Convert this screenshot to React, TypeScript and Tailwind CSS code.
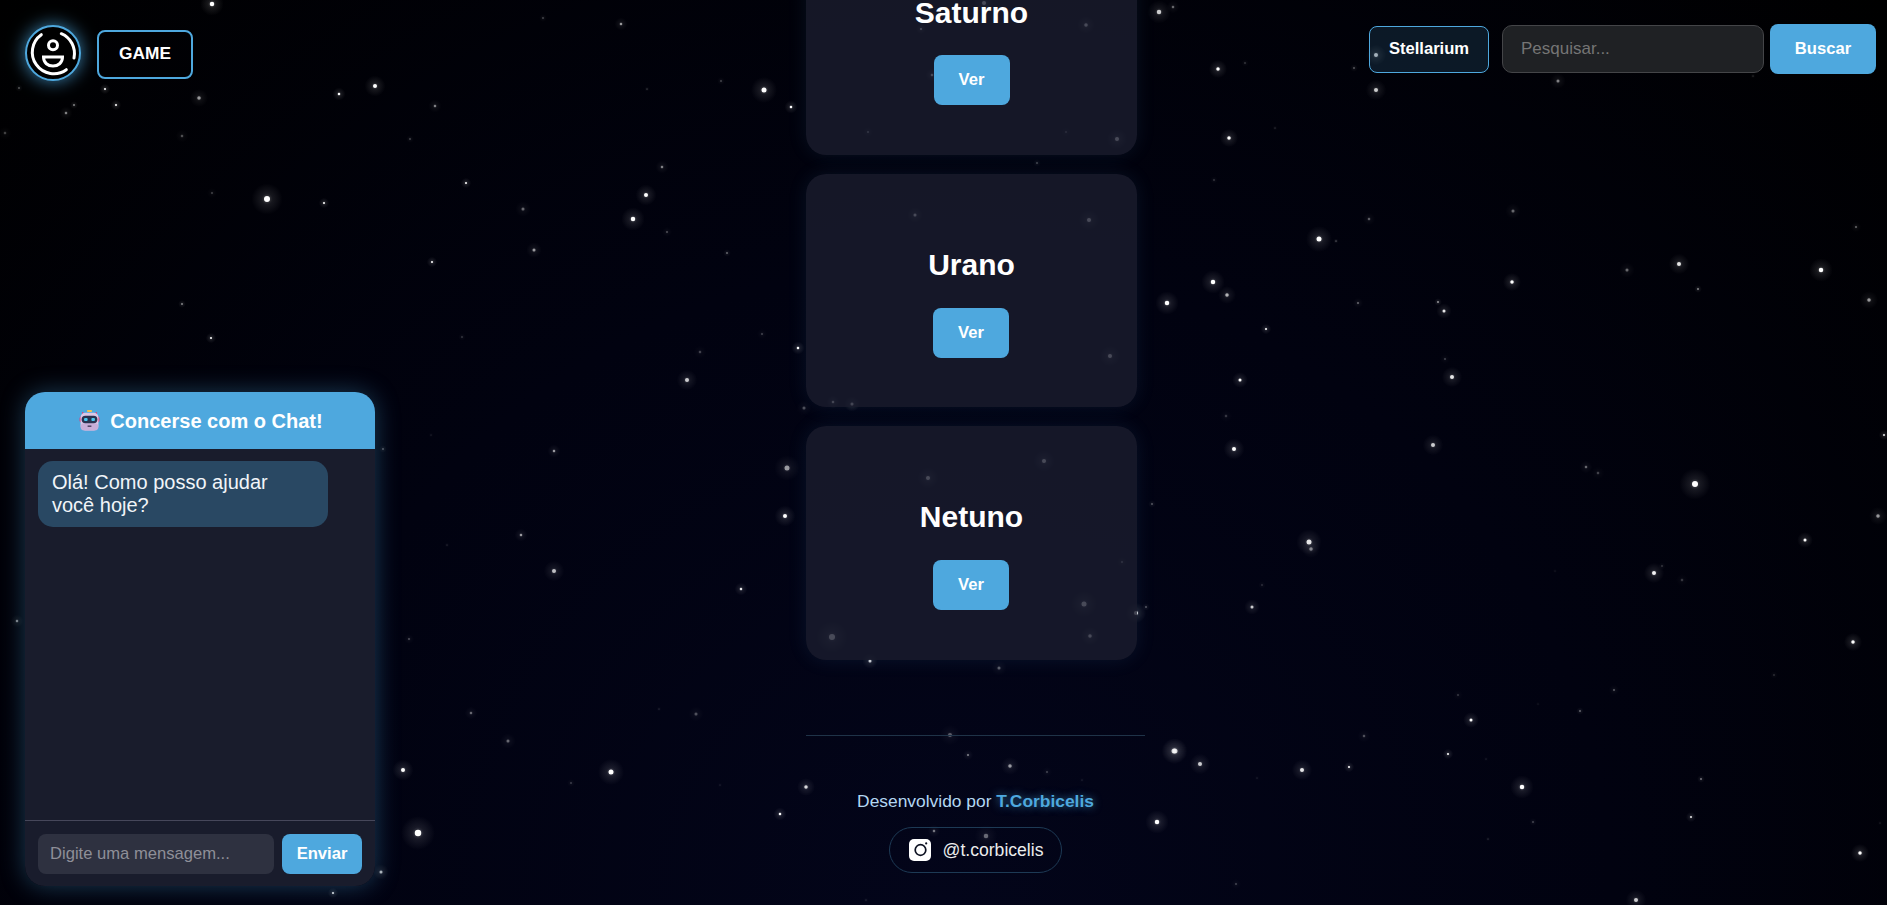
// star field: [x, y, diameter, opacity]
const stars: [number, number, number, number][] = [
  [19, 88, 1.5, 0.5], [105, 89, 2, 1], [199, 98, 3.5, 0.6], [339, 94, 2.5, 1], [375, 86, 4, 1], [435, 106, 2.5, 0.5],
  [74, 105, 1.5, 0.8], [116, 105, 2, 1], [66, 113, 2.5, 0.5], [5, 133, 2.5, 0.25], [182, 136, 2.5, 0.3], [410, 139, 1.5, 0.4],
  [647, 89, 1, 0.4], [721, 81, 1.5, 0.4], [764, 90, 5, 1], [791, 107, 2.5, 1], [662, 167, 2.5, 0.5], [466, 183, 2, 1],
  [646, 195, 4, 1], [212, 193, 2, 0.25], [267, 199, 6, 1], [324, 203, 2, 1], [523, 209, 3, 0.4], [633, 219, 4.5, 1],
  [667, 232, 2, 0.3], [534, 250, 3, 0.6], [727, 253, 1.5, 0.6], [432, 262, 2, 1], [182, 304, 1.5, 0.8], [211, 338, 2, 1],
  [462, 337, 1.5, 0.3], [762, 334, 2, 0.25], [798, 348, 2.5, 1], [700, 352, 2.5, 0.25], [687, 380, 4, 0.8],
  [212, 4, 4.5, 1], [543, 18, 1.5, 0.4], [621, 24, 2.5, 0.6], [1159, 12, 4.5, 0.8], [1173, 7, 2.5, 0.4], [1218, 69, 3.5, 1],
  [1245, 63, 1.5, 0.3], [1376, 55, 4, 0.7], [1354, 68, 1.5, 0.5], [1376, 90, 4, 0.8], [1558, 81, 3, 0.5], [1753, 76, 1, 0.3],
  [1229, 138, 3.5, 1], [1275, 128, 1, 0.3], [1214, 180, 1.5, 0.3], [1513, 211, 3, 0.4], [1369, 219, 2.5, 0.35], [1319, 239, 5, 1],
  [1336, 241, 1, 0.6], [1679, 264, 4, 0.9], [1627, 270, 3, 0.4], [1821, 270, 4.5, 1], [1856, 227, 2, 0.4], [1213, 282, 4.5, 1],
  [1512, 282, 3.5, 1], [1227, 295, 3.5, 0.7], [1698, 289, 1.5, 0.8], [1167, 303, 4.5, 1], [1358, 303, 2, 0.4], [1438, 302, 1.5, 0.9],
  [1444, 311, 3, 0.9], [1869, 300, 3.5, 0.6], [1266, 329, 2, 1], [1445, 359, 2, 0.25], [1240, 380, 3, 1], [1452, 377, 4, 0.9],
  [1226, 416, 2.5, 0.2], [1234, 449, 4, 1], [1433, 445, 4, 0.8], [1884, 435, 2, 0.9], [1586, 467, 2.5, 0.4], [1598, 473, 2.5, 0.25],
  [1695, 484, 6, 1], [1152, 504, 1.5, 0.5], [1878, 516, 3.5, 0.6], [1805, 540, 3, 1], [1309, 542, 5, 0.9], [1311, 549, 3.5, 0.5],
  [1654, 573, 4, 0.95], [1662, 566, 1.5, 0.3], [1682, 580, 2.5, 0.2], [1555, 571, 1, 0.15], [1262, 585, 1.5, 0.25], [1252, 607, 3, 0.8],
  [1146, 607, 1.5, 0.5], [1136, 613, 4, 0.9], [1853, 642, 3.5, 1], [1774, 675, 1.5, 0.25], [1614, 690, 2, 0.35], [1458, 695, 2, 0.2],
  [1580, 711, 1.5, 0.6], [1538, 704, 1, 0.15], [1471, 720, 3, 1], [1364, 736, 2.5, 0.3], [1175, 751, 5, 0.8], [1200, 764, 4, 0.8],
  [1448, 754, 2, 1], [1486, 759, 1, 0.2], [1302, 770, 4, 0.9], [1349, 767, 2, 1], [1257, 778, 1, 0.2], [1701, 779, 1.5, 0.7],
  [1522, 787, 4.5, 1], [1157, 822, 4.5, 1], [1691, 817, 2, 0.9], [1533, 822, 1.5, 0.4], [1880, 823, 1, 0.2], [1488, 839, 1, 0.3],
  [1860, 853, 3.5, 1], [1236, 884, 2, 0.25], [1636, 900, 4, 0.8],
  [804, 408, 3, 0.3], [431, 435, 1, 0.2], [383, 449, 1.5, 0.5], [554, 451, 2.5, 0.6], [787, 468, 5, 0.6], [785, 516, 4, 1],
  [521, 535, 2.5, 0.6], [447, 545, 1, 0.25], [554, 571, 4, 0.75], [741, 589, 2.5, 0.9], [409, 639, 2, 0.3], [471, 713, 2.5, 0.4],
  [659, 709, 1, 0.25], [696, 714, 3, 0.3], [508, 741, 3, 0.4], [403, 770, 4, 1], [611, 772, 5, 1], [571, 783, 1.5, 0.35],
  [720, 785, 1, 0.2], [806, 787, 3.5, 0.85], [780, 814, 2.5, 1], [418, 833, 6.5, 1], [381, 872, 3, 0.7], [333, 893, 2, 0.9],
  [17, 621, 2.5, 0.5],
  // under the cards
  [1086, 25, 3.5, 1], [984, 3, 4, 1], [921, 29, 2, 1], [932, 75, 2.5, 1], [868, 132, 2, 0.6], [1066, 132, 2, 0.4], [1117, 139, 4, 1],
  [1037, 163, 1.5, 0.4], [852, 404, 3, 0.9], [928, 478, 4, 1], [1044, 461, 4, 1], [1122, 562, 2, 0.5], [1084, 604, 5, 1],
  [1090, 636, 3.5, 1], [832, 637, 6, 1], [870, 661, 3, 0.8], [999, 668, 3, 0.35], [915, 215, 3, 1], [1089, 220, 4, 1], [1110, 356, 4, 1],
  [833, 402, 2.5, 0.9], [950, 735, 4, 0.35], [968, 755, 2, 0.5], [1010, 766, 3.5, 0.6], [1047, 772, 2, 0.25], [1082, 780, 1, 0.2],
  [1174, 751, 5, 0.8], [934, 831, 2.5, 0.45], [986, 836, 4.5, 0.4], [866, 900, 1, 0.25],
];

const planets = [
  { name: "Saturno", card: "h-[233px]", button: "-translate-y-px" },
  { name: "Urano", card: "h-[233px]", button: "mr-px" },
  { name: "Netuno", card: "h-[234px]", button: "mr-px" },
];

function StarField() {
  return (
    <svg className="absolute inset-0 h-full w-full" viewBox="0 0 1887 905" aria-hidden>
      <defs>
        <radialGradient id="halo">
          <stop offset="0%" stopColor="#ffffff" stopOpacity="0.3" />
          <stop offset="35%" stopColor="#ffffff" stopOpacity="0.09" />
          <stop offset="100%" stopColor="#ffffff" stopOpacity="0" />
        </radialGradient>
      </defs>
      {stars.map(([x, y, d, o], i) => (
        <g key={i} opacity={o}>
          <circle cx={x} cy={y} r={d * 2.6} fill="url(#halo)" />
          <circle cx={x} cy={y} r={d / 2} fill="#ffffff" />
        </g>
      ))}
    </svg>
  );
}

function Logo() {
  return (
    <div className="h-[56px] w-[56px] shrink-0 rounded-full border-2 border-[#4ea8de] bg-black shadow-[0_0_18px_rgba(78,168,222,0.8)]">
      <svg viewBox="0 0 56 56" className="-m-[2px] h-[56px] w-[56px]" fill="none" stroke="#ffffff" strokeWidth="3" strokeLinecap="round">
        <path d="M16.3 9.7 A21.5 21.5 0 1 0 41.3 44.7" />
        <path d="M36.3 8.7 A21.5 21.5 0 0 1 49 33" />
        <circle cx="28" cy="20.3" r="4.5" />
        <path d="M18.5 32 H37.5 C37.5 38 33 41 28 41 C23 41 18.5 38 18.5 32 Z" />
      </svg>
    </div>
  );
}

function RobotIcon() {
  return (
    <svg viewBox="0 0 20 20" className="h-[21px] w-[21px] shrink-0" aria-hidden>
      <rect x="7.5" y="0" width="5" height="2" rx="1" fill="#f3c14b" />
      <path d="M3.5 2 V6 M16.5 2 V6" stroke="#d9457f" strokeWidth="1.2" />
      <rect x="0.5" y="6" width="19" height="6" rx="2" fill="#d9457f" />
      <rect x="1.5" y="2.5" width="17" height="17" rx="4.5" fill="#dcc6e6" />
      <rect x="1.5" y="12.5" width="17" height="7" rx="3.5" fill="#c9aed8" />
      <rect x="2.5" y="5.5" width="15" height="7" rx="3.5" fill="#2b3350" />
      <rect x="4.8" y="7.5" width="3.4" height="3" rx="1" fill="#49c6ef" />
      <rect x="11.8" y="7.5" width="3.4" height="3" rx="1" fill="#49c6ef" />
      <rect x="8.2" y="14.8" width="3.6" height="1.2" fill="#3b3350" />
    </svg>
  );
}

function Chat() {
  return (
    <div className="absolute bottom-[19px] left-[25px] flex h-[494px] w-[350px] flex-col overflow-hidden rounded-[20px] bg-[rgba(26,29,45,0.97)] shadow-[0_0_25px_rgba(78,168,222,0.35)]">
      <div className="flex h-[57px] shrink-0 items-center justify-center gap-[10px] bg-[#4ea8de] pl-[2px] text-[20px] font-bold text-white">
        <RobotIcon />
        <span>Concerse com o Chat!</span>
      </div>
      <div className="flex-1 px-[13px] pt-[12px]">
        <div className="w-[290px] rounded-[15px] bg-[#294863] px-[14px] py-[10px] text-[20px] leading-[23px] text-[#f1f5f9]">
          Olá! Como posso ajudar você hoje?
        </div>
      </div>
      <div className="flex h-[66px] shrink-0 items-start gap-[8px] border-t border-[#46475a] px-[13px] pt-[13px]">
        <input
          placeholder="Digite uma mensagem..."
          className="h-[40px] w-[236px] rounded-[8px] bg-[#2e3140] px-[12px] text-[16.6px] text-white outline-none placeholder:text-[#8e8f98]"
        />
        <button className="h-[40px] w-[82px] rounded-[8px] bg-[#4ea8de] text-[16.6px] font-bold text-white">Enviar</button>
      </div>
    </div>
  );
}

function PlanetCard({ name, card, button }: { name: string; card: string; button: string }) {
  return (
    <div className={`flex w-[331px] flex-col items-center rounded-[20px] bg-[rgba(26,29,46,0.8)] pt-[74px] shadow-[0_0_20px_rgba(78,168,222,0.1)] ${card}`}>
      <h2 className="text-[30px] font-bold leading-[34px] text-white">{name}</h2>
      <button className={`mt-[26px] h-[50px] w-[76px] rounded-[8px] bg-[#4ea8de] text-[16.6px] font-bold text-white ${button}`}>Ver</button>
    </div>
  );
}

function InstagramIcon() {
  return (
    <svg viewBox="0 0 22 22" className="h-[22px] w-[22px] shrink-0" aria-hidden>
      <rect width="22" height="22" rx="5" fill="#ffffff" />
      <circle cx="11.5" cy="11" r="5.3" fill="none" stroke="#0b1020" strokeWidth="1.7" />
      <circle cx="17.2" cy="4.4" r="1.1" fill="#0b1020" />
    </svg>
  );
}

export default function App() {
  return (
    <div className="relative h-[905px] w-full overflow-hidden bg-[radial-gradient(ellipse_at_50%_100%,#03051a_0%,#010210_50%,#000000_100%)] font-['Liberation_Sans',Arial,sans-serif]">
      <StarField />

      <main className="relative ml-[806px] -mt-[78px] flex w-[339px] flex-col">
        <div className="flex flex-col gap-[19px]">
          {planets.map((p) => (
            <PlanetCard key={p.name} name={p.name} card={p.card} button={p.button} />
          ))}
        </div>
        <footer className="mt-[75px] flex flex-col items-center border-t border-[#1f3348] pt-[56px]">
          <p className="text-[17.4px] leading-[19px] text-[#b3d7f2]">
            Desenvolvido por{" "}
            <span className="font-bold text-[#4ea8de] [text-shadow:0_0_8px_rgba(78,168,222,0.7)]">T.Corbicelis</span>
          </p>
          <a className="mt-[16px] flex h-[46px] w-[173px] items-center justify-center gap-[12px] rounded-full border border-[#1d3a55] pl-[1px] text-[17.6px] text-[#ececec]">
            <InstagramIcon />
            @t.corbicelis
          </a>
        </footer>
      </main>

      <header className="absolute left-[25px] right-[11px] top-0 flex items-start justify-between">
        <div className="flex items-center gap-[16px] pt-[25px]">
          <Logo />
          <button className="mt-[2px] h-[49px] w-[96px] rounded-[8px] border-2 border-[#4ea8de] text-[17.3px] font-bold text-white">GAME</button>
        </div>
        <div className="flex items-center gap-[6px] pt-[24px]">
          <button className="mr-[7px] h-[47px] w-[120px] rounded-[8px] border border-[#4ea8de] bg-[rgba(78,168,222,0.15)] text-[16.6px] font-bold text-white">Stellarium</button>
          <input
            placeholder="Pesquisar..."
            className="h-[48px] w-[262px] rounded-[10px] border border-[#444548] bg-[#1f2124] px-[18px] text-[17px] text-white outline-none placeholder:text-[#757575]"
          />
          <button className="h-[50px] w-[106px] rounded-[8px] bg-[#4ea8de] text-[16.6px] font-bold text-white">Buscar</button>
        </div>
      </header>

      <Chat />
    </div>
  );
}
